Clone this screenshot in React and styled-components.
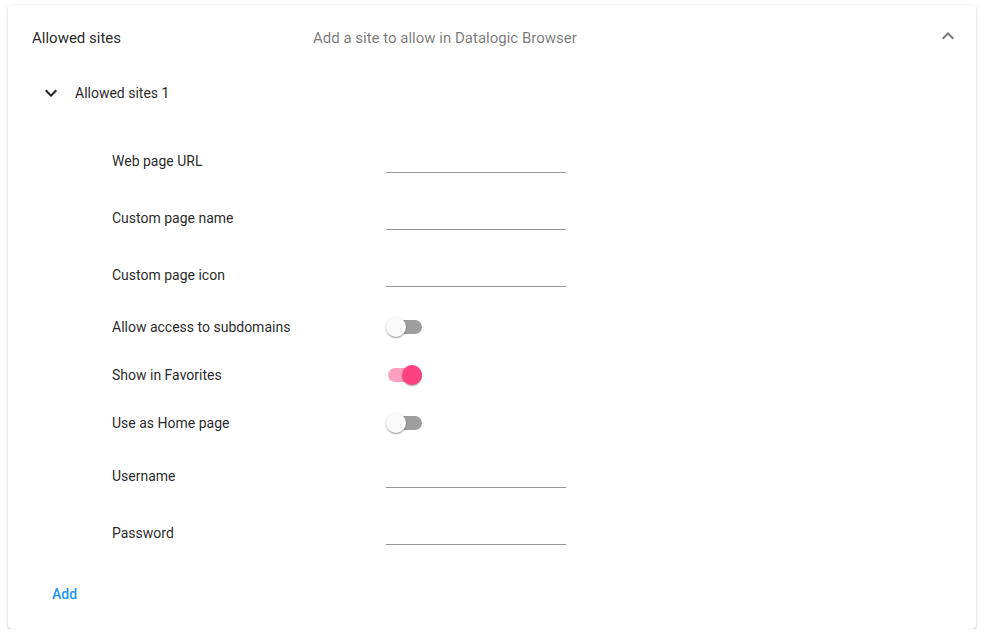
import styled, { createGlobalStyle } from "styled-components";
import { useState } from "react";

const GlobalStyle = createGlobalStyle`
    html, body {
        margin: 0;
        padding: 0;
        background: #fff;
        font-family: Roboto, "Helvetica Neue", Arial, sans-serif;
    }
`;

const fields = [
    { label: "Web page URL", kind: "text" },
    { label: "Custom page name", kind: "text" },
    { label: "Custom page icon", kind: "text" },
    { label: "Allow access to subdomains", kind: "switch", on: false },
    { label: "Show in Favorites", kind: "switch", on: true },
    { label: "Use as Home page", kind: "switch", on: false },
    { label: "Username", kind: "text" },
    { label: "Password", kind: "text", type: "password" },
];

const ExpandLess = ({ color }) => (
    <svg width="24" height="24" viewBox="0 0 24 24" fill={color}>
        <path d="M12 8l-6 6 1.41 1.41L12 10.83l4.59 4.58L18 14z" />
    </svg>
);

const ExpandMore = ({ color }) => (
    <svg width="24" height="24" viewBox="0 0 24 24" fill={color}>
        <path d="M16.59 8.59L12 13.17 7.41 8.59 6 10l6 6 6-6z" />
    </svg>
);

const Toggle = ({ initial }) => {
    const [on, setOn] = useState(initial);
    return (
        <SwitchBox onClick={() => setOn(!on)}>
            <Track $on={on} />
            <Thumb $on={on} />
        </SwitchBox>
    );
};

const App = () => {
    return (
        <>
            <GlobalStyle />
            <Card>
                <Header>
                    <Heading>Allowed sites</Heading>
                    <SecondaryHeading>Add a site to allow in Datalogic Browser</SecondaryHeading>
                    <IconSlot>
                        <ExpandLess color="rgba(0, 0, 0, 0.54)" />
                    </IconSlot>
                </Header>
                <SubHeader>
                    <ExpandMore color="rgba(0, 0, 0, 0.87)" />
                    <SubTitle>Allowed sites 1</SubTitle>
                </SubHeader>
                <Fields>
                    {fields.map((f) => (
                        <Row key={f.label} $kind={f.kind}>
                            <Label>{f.label}</Label>
                            {f.kind === "text" ? (
                                <Input type={f.type || "text"} />
                            ) : (
                                <Toggle initial={f.on} />
                            )}
                        </Row>
                    ))}
                </Fields>
                <Actions>
                    <AddButton>Add</AddButton>
                </Actions>
            </Card>
        </>
    );
};

const Card = styled.div`
    margin: 5px 8px 0;
    width: 968px;
    background: #fff;
    border-radius: 4px;
    box-shadow: 0px 1px 3px 0px rgba(0, 0, 0, 0.2),
        0px 1px 1px 0px rgba(0, 0, 0, 0.14),
        0px 2px 1px -1px rgba(0, 0, 0, 0.12);
    padding-bottom: 17px;
`;

const Header = styled.div`
    display: flex;
    align-items: center;
    height: 64px;
    padding: 1px 16px 0 24px;
    box-sizing: border-box;
`;

const Heading = styled.div`
    width: 281px;
    font-size: 15px;
    color: rgba(0, 0, 0, 0.87);
`;

const SecondaryHeading = styled.div`
    flex: 1;
    font-size: 15px;
    color: rgba(0, 0, 0, 0.54);
`;

const IconSlot = styled.div`
    display: flex;
    margin-top: -4px;
`;

const SubHeader = styled.div`
    display: flex;
    align-items: center;
    height: 48px;
    padding-left: 31px;
    gap: 12px;
`;

const SubTitle = styled.div`
    font-size: 14px;
    color: rgba(0, 0, 0, 0.87);
`;

const Fields = styled.div`
    margin-top: 15px;
    padding-left: 104px;
`;

const Row = styled.div`
    display: grid;
    grid-template-columns: 274px 180px;
    align-items: center;
    height: ${(p) => (p.$kind === "text" ? "57px" : "48px")};
`;

const Label = styled.div`
    font-size: 14px;
    color: rgba(0, 0, 0, 0.87);
`;

const Input = styled.input`
    box-sizing: border-box;
    width: 180px;
    height: 24px;
    margin-top: 1px;
    border: none;
    border-bottom: 1px solid rgba(0, 0, 0, 0.42);
    outline: none;
    padding: 0;
    font: inherit;
    font-size: 14px;
    background: transparent;
`;

const SwitchBox = styled.div`
    position: relative;
    width: 37px;
    height: 20px;
    cursor: pointer;
`;

const Track = styled.span`
    position: absolute;
    left: 2px;
    top: 3px;
    width: 34px;
    height: 14px;
    border-radius: 7px;
    background: ${(p) => (p.$on ? "#ff4081" : "#000")};
    opacity: ${(p) => (p.$on ? 0.5 : 0.38)};
`;

const Thumb = styled.span`
    position: absolute;
    top: 0;
    left: ${(p) => (p.$on ? "16px" : "0")};
    width: 20px;
    height: 20px;
    border-radius: 50%;
    background: ${(p) => (p.$on ? "#ff4081" : "#fafafa")};
    box-shadow: 0px 1px 3px 0px rgba(0, 0, 0, 0.2),
        0px 1px 1px 0px rgba(0, 0, 0, 0.14),
        0px 2px 1px -1px rgba(0, 0, 0, 0.12);
`;

const Actions = styled.div`
    margin-top: 15px;
    padding-left: 28px;
`;

const AddButton = styled.button`
    height: 36px;
    padding: 0 16px;
    border: none;
    background: transparent;
    border-radius: 4px;
    font-family: Roboto, sans-serif;
    font-size: 14px;
    font-weight: 500;
    color: #2196f3;
    cursor: pointer;
`;

export default App;
